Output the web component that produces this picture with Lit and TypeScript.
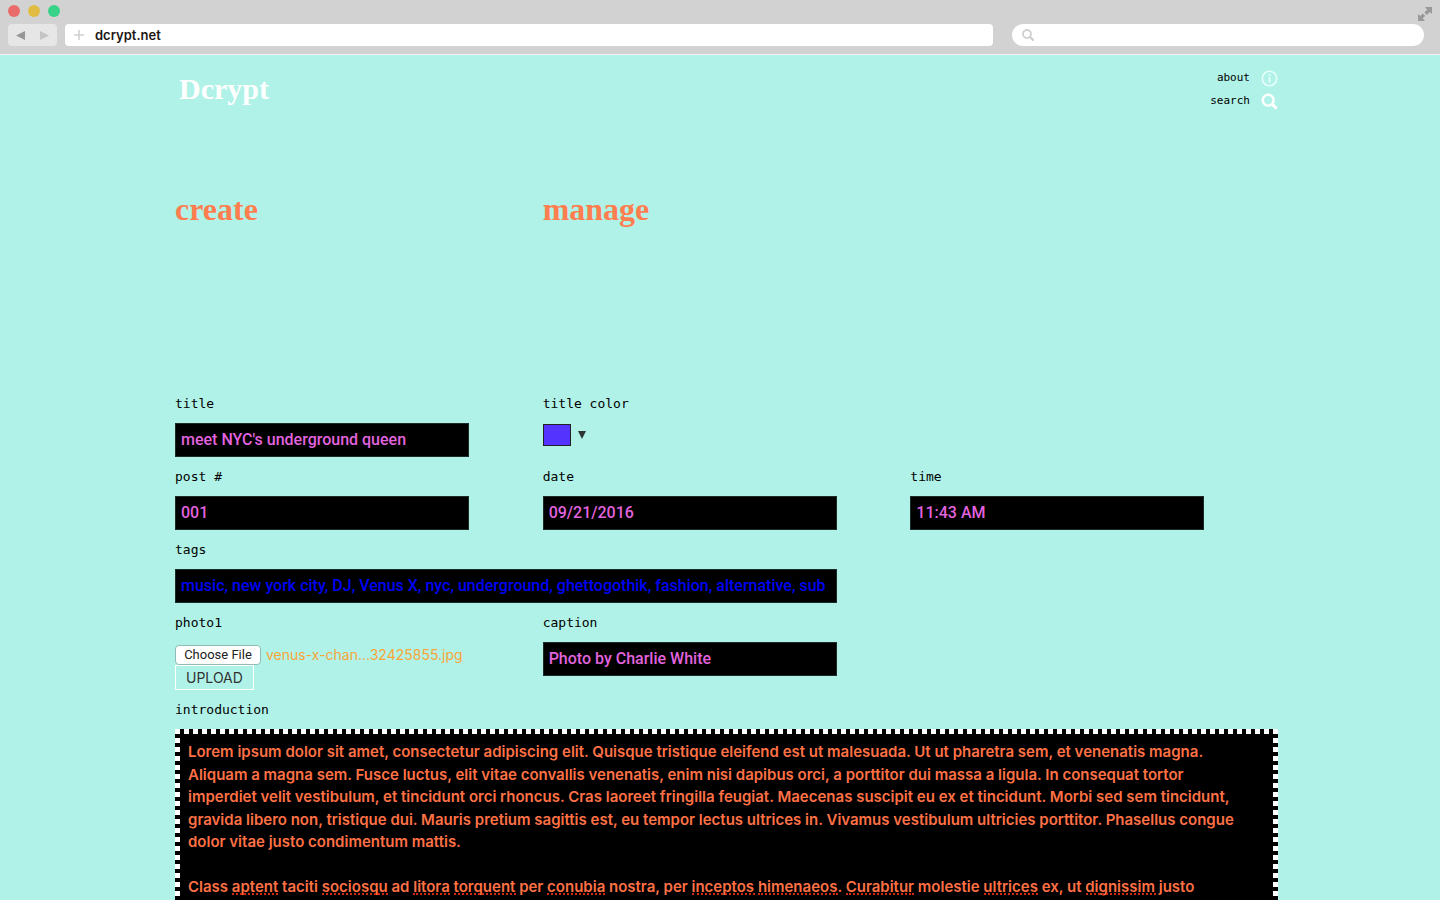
import { LitElement, html, css } from "lit";
import { customElement, state } from "lit/decorators.js";

const INTRO_FONT = '600 15px Inter, "Liberation Sans", sans-serif';

const FIRST_PARAGRAPH =
  "Lorem ipsum dolor sit amet, consectetur adipiscing elit. Quisque tristique eleifend est ut malesuada. Ut ut pharetra sem, et venenatis magna. " +
  "Aliquam a magna sem. Fusce luctus, elit vitae convallis venenatis, enim nisi dapibus orci, a porttitor dui massa a ligula. In consequat tortor " +
  "imperdiet velit vestibulum, et tincidunt orci rhoncus. Cras laoreet fringilla feugiat. Maecenas suscipit eu ex et tincidunt. Morbi sed sem tincidunt, " +
  "gravida libero non, tristique dui. Mauris pretium sagittis est, eu tempor lectus ultrices in. Vivamus vestibulum ultricies porttitor. Phasellus congue " +
  "dolor vitae justo condimentum mattis.";

const SECOND_PARAGRAPH =
  "Class aptent taciti sociosqu ad litora torquent per conubia nostra, per inceptos himenaeos. Curabitur molestie ultrices ex, ut dignissim justo";

const UNKNOWN_WORDS = [
  "aptent", "sociosqu", "litora", "torquent", "conubia",
  "inceptos", "himenaeos", "Curabitur", "ultrices", "dignissim",
];

interface Mark { left: number; width: number; }

/** Browser window bar: lights, history buttons, address and search boxes. */
@customElement("browser-bar")
export class BrowserBar extends LitElement {
  static styles = css`
    :host { display: block; position: relative; background: #d2d2d2; border-bottom: 1px solid #f2f2f2; }
    .lights { display: flex; gap: 8px; padding: 5px 8px 7px; }
    .light { width: 12px; height: 12px; border-radius: 50%; }
    .close { background: #e96c6a; }
    .minimise { background: #e0bc42; }
    .zoom { background: #37d388; }
    .row { display: grid; grid-template-columns: 49px 936fr 19px 412fr; padding: 0 16px 8px 8px; }
    .history { display: flex; border-radius: 4px; background: #e6e6e6; }
    .history button { flex: 1; display: flex; align-items: center; justify-content: center; padding: 0; border: 0; background: none; }
    .box { display: flex; align-items: center; height: 22px; background: #fff; }
    .address { margin-left: 8px; border-radius: 4px; padding: 0 8px; gap: 10px; }
    .search { grid-column: 4; border-radius: 11px; padding: 0 10px; gap: 8px; }
    input { flex: 1; min-width: 0; padding: 0; border: 0; outline: 0; background: none; color: #1c1614; font: 600 13px/22px Inter, "Liberation Sans", sans-serif; }
    .expand { position: absolute; top: 7px; right: 8px; padding: 0; border: 0; background: none; line-height: 0; }
    svg { display: block; flex: none; }
  `;

  render() {
    return html`
      <div class="lights">
        <span class="light close"></span><span class="light minimise"></span><span class="light zoom"></span>
      </div>
      <button class="expand" aria-label="Full screen">
        <svg width="14" height="14" viewBox="0 0 14 14" fill="#999">
          <path d="M7 0h7v7l-2.2-2-3 3-2.4-2.4 2.8-2.8zM0 7l2.2 2 2.6-2.6 2.4 2.4-2.4 2.6L7 14H0z" />
        </svg>
      </button>
      <div class="row">
        <div class="history">
          <button aria-label="Back"><svg width="9" height="9" viewBox="0 0 9 9"><path d="M0 4.5 9 0v9z" fill="#969696" /></svg></button>
          <button aria-label="Forward"><svg width="9" height="9" viewBox="0 0 9 9"><path d="M9 4.5 0 0v9z" fill="#c4c4c4" /></svg></button>
        </div>
        <div class="box address">
          <svg width="12" height="12" viewBox="0 0 12 12"><path d="M6 1v10M1 6h10" stroke="#d0d0d0" stroke-width="1.6" /></svg>
          <input aria-label="Address" value="dcrypt.net" />
        </div>
        <div class="box search">
          <svg width="12" height="12" viewBox="0 0 12 12" fill="none" stroke="#d0d0d0"><circle cx="5" cy="5" r="4" stroke-width="1.8" /><path d="m8 8 3.6 3.6" stroke-width="2.4" /></svg>
          <input aria-label="Search" />
        </div>
      </div>
    `;
  }
}

@customElement("app-root")
export class AppRoot extends LitElement {
  static styles = css`
    :host { display: block; height: 100vh; overflow: hidden; background: #b0f2e7; color: #000; font: 13px/22px "DejaVu Sans Mono", monospace; }
    *, *::before { box-sizing: border-box; }
    a { color: inherit; text-decoration: none; }
    svg { display: block; }

    .page { padding: 12px 162px 0 175px; }
    header { display: flex; justify-content: space-between; align-items: flex-start; }
    h1, h2 { margin: 0; font-family: "Liberation Serif", serif; font-weight: 700; }
    h1 { padding: 2px 4px; color: #fff; font-size: 30px; line-height: 40px; }
    h2 { color: #ff7e50; font-size: 32px; line-height: 40px; }
    .links { display: grid; gap: 1px; font-size: 11px; }
    .links a { display: flex; align-items: center; justify-content: flex-end; gap: 11px; }

    .tabs { display: grid; grid-template-columns: repeat(3, 1fr); margin-top: 77px; }
    form { display: grid; grid-template-columns: repeat(3, 1fr); row-gap: 9px; margin-top: 164px; }
    .field { display: flex; flex-direction: column; align-items: flex-start; gap: 8px; min-width: 0; }
    .one { grid-column: 1; }
    .wide { grid-column: span 2; }
    .full { grid-column: 1 / -1; }
    .text { width: 80%; height: 34px; padding: 0 5px 2px; border: 1px solid #1c2c29; border-radius: 0; outline: 0; background: #000; color: #e263de; font: 500 16px/30px Roboto, "Liberation Sans", sans-serif; }
    .wide .text { width: 90%; color: #0000f5; }

    .picker { display: flex; align-items: center; gap: 7px; height: 24px; }
    .swatch { appearance: none; width: 28px; height: 22px; padding: 0; border: 1px solid #222; background: #5533ff; }
    .swatch::-webkit-color-swatch-wrapper { padding: 0; }
    .swatch::-webkit-color-swatch { border: 0; }

    .upload { width: 80%; padding-top: 3px; }
    .chosen { display: flex; align-items: center; gap: 5px; height: 20px; }
    .chosen output { color: #f9a53a; font: 14px/20px Inter, sans-serif; }
    .file { width: 86px; height: 20px; overflow: hidden; color: transparent; font: 13px/18px Roboto, sans-serif; }
    .file::file-selector-button { width: 86px; height: 20px; margin: 0; padding: 0; border: 1px solid #8fbdb5; border-radius: 4px; background: #fff; color: #222; font: inherit; }
    .send { display: block; height: 25px; padding: 0 10px; border: 1px solid #fff; background: none; color: #333; font: 14px/22px Inter, sans-serif; }

    .editor {
      position: relative; width: 100%; padding: 5px;
      background:
        repeating-linear-gradient(90deg, #fff 0 5px, #000 5px 9px) top / 100% 5px no-repeat,
        repeating-linear-gradient(#fff 0 5px, #000 5px 9px) left / 5px 100% no-repeat,
        repeating-linear-gradient(#fff 0 5px, #000 5px 9px) right / 5px 100% no-repeat,
        #000;
    }
    textarea { display: block; width: 100%; height: 240px; padding: 7px 24px 7px 8px; border: 0; outline: 0; resize: none; overflow: hidden; background: none; color: #ff7145; font: 600 15px/1.5 Inter, "Liberation Sans", sans-serif; }
    .mark { position: absolute; top: 164px; margin-left: 13px; border-bottom: 2px dotted #d22a10; }
  `;

  @state() private marks: Mark[] = [];

  connectedCallback() {
    super.connectedCallback();
    this.marks = this.measureMarks();
  }

  /** Finds where each unknown word of the second paragraph starts and how wide it is. */
  private measureMarks(): Mark[] {
    const ctx = document.createElement("canvas").getContext("2d");
    if (!ctx) return [];
    ctx.font = INTRO_FONT;
    return UNKNOWN_WORDS.map((word) => ({
      left: Math.round(ctx.measureText(SECOND_PARAGRAPH.slice(0, SECOND_PARAGRAPH.indexOf(word))).width),
      width: Math.round(ctx.measureText(word).width),
    }));
  }

  private field(id: string, label: string, value: string, place = "") {
    return html`<div class="field ${place}">
      <label for=${id}>${label}</label>
      <input class="text" id=${id} .value=${value} />
    </div>`;
  }

  render() {
    return html`
      <browser-bar></browser-bar>
      <div class="page">
        <header>
          <h1><a href="#">Dcrypt</a></h1>
          <nav class="links">
            <a href="#about">about
              <svg width="17" height="17" viewBox="0 0 17 17" fill="none" stroke="#e6fffa"><circle cx="8.5" cy="8.5" r="7.2" stroke-width="1.6" /><path d="M8.5 7v5.5M8.5 4.3v1.5" stroke-width="1.8" /></svg>
            </a>
            <a href="#search">search
              <svg width="17" height="17" viewBox="0 0 17 17" fill="none" stroke="#fff"><circle cx="7.2" cy="7.2" r="5.4" stroke-width="2.4" /><path d="m11 11 4.6 4.6" stroke-width="3" /></svg>
            </a>
          </nav>
        </header>
        <nav class="tabs">
          <h2><a href="#create">create</a></h2>
          <h2><a href="#manage">manage</a></h2>
        </nav>
        <form @submit=${(e: Event) => e.preventDefault()}>
          ${this.field("title", "title", "meet NYC's underground queen")}
          <div class="field">
            <label for="color">title color</label>
            <div class="picker">
              <input class="swatch" id="color" type="color" value="#5533ff" />
              <svg width="8" height="8" viewBox="0 0 8 8"><path d="M0 0h8L4 8z" fill="#2f3634" /></svg>
            </div>
          </div>
          ${this.field("post", "post #", "001", "one")}
          ${this.field("date", "date", "09/21/2016")}
          ${this.field("time", "time", "11:43 AM")}
          ${this.field("tags", "tags", "music, new york city, DJ, Venus X, nyc, underground, ghettogothik, fashion, alternative, sub", "wide")}
          <div class="field one">
            <label for="photo">photo1</label>
            <div class="upload">
              <div class="chosen">
                <input class="file" id="photo" type="file" />
                <output for="photo">venus-x-chan…32425855.jpg</output>
              </div>
              <button class="send" type="button">UPLOAD</button>
            </div>
          </div>
          ${this.field("caption", "caption", "Photo by Charlie White")}
          <div class="field full">
            <label for="intro">introduction</label>
            <div class="editor">
              <textarea id="intro" spellcheck="false" .value=${FIRST_PARAGRAPH + "\n\n" + SECOND_PARAGRAPH}></textarea>
              ${this.marks.map((m) => html`<span class="mark" style="left:${m.left}px;width:${m.width}px"></span>`)}
            </div>
          </div>
        </form>
      </div>
    `;
  }
}
